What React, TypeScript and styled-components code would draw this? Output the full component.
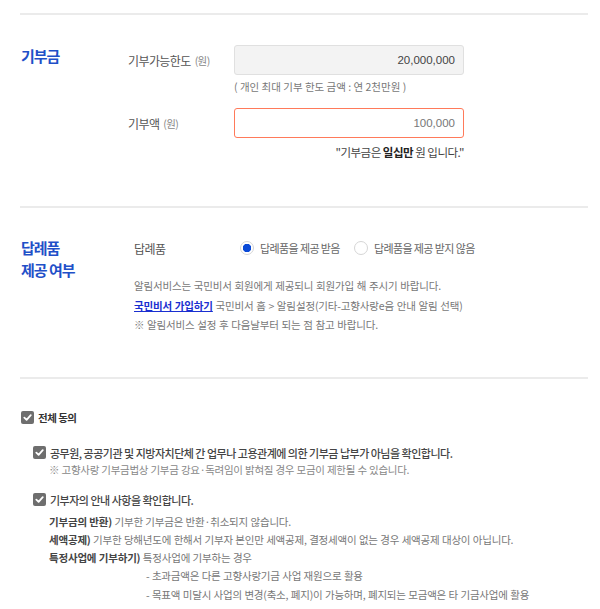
import React from 'react';
import styled, { createGlobalStyle } from 'styled-components';

const GlobalStyle = createGlobalStyle`
  body {
    margin: 0;
    background: #fff;
    font-family: "Noto Sans CJK KR", "Noto Sans", sans-serif;
    color: #444;
  }
`;

const CheckIcon = () => (
  <svg width="9" height="9" viewBox="0 0 10 10">
    <path d="M1.5 5.2 L4 7.6 L8.6 2.4" fill="none" stroke="#fff" strokeWidth="2" strokeLinecap="round" strokeLinejoin="round" />
  </svg>
);

const agreeNotes = [
  { title: '기부금의 반환)', text: '기부한 기부금은 반환·취소되지 않습니다.' },
  { title: '세액공제)', text: '기부한 당해년도에 한해서 기부자 본인만 세액공제, 결정세액이 없는 경우 세액공제 대상이 아닙니다.' },
  { title: '특정사업에 기부하기)', text: '특정사업에 기부하는 경우' },
];

const subNotes = [
  '- 초과금액은 다른 고향사랑기금 사업 재원으로 활용',
  '- 목표액 미달시 사업의 변경(축소, 폐지)이 가능하며, 폐지되는 모금액은 타 기금사업에 활용',
];

export default function App() {
  return (
    <Page>
      <GlobalStyle />
      <Section $pad="30px 0 46px">
        <Heading>기부금</Heading>
        <Fields>
          <FieldRow>
            <Label>기부가능한도 <Unit>(원)</Unit></Label>
            <InputCol>
              <Amount $readonly>20,000,000</Amount>
              <Hint>( 개인 최대 기부 한도 금액 : 연 2천만원 )</Hint>
            </InputCol>
          </FieldRow>
          <FieldRow>
            <Label>기부액 <Unit>(원)</Unit></Label>
            <InputCol>
              <Amount>100,000</Amount>
              <Spelled>"기부금은 <b>일십만</b> 원 입니다."</Spelled>
            </InputCol>
          </FieldRow>
        </Fields>
      </Section>

      <Section $pad="29px 0 42px">
        <Heading>답례품<br />제공 여부</Heading>
        <GiftBody>
          <GiftRow>
            <GiftLabel>답례품</GiftLabel>
            <RadioGroup>
              <RadioOption>
                <Radio $checked />
                답례품을 제공 받음
              </RadioOption>
              <RadioOption>
                <Radio />
                답례품을 제공 받지 않음
              </RadioOption>
            </RadioGroup>
          </GiftRow>
          <InfoList>
            <p>알림서비스는 국민비서 회원에게 제공되니 회원가입 해 주시기 바랍니다.</p>
            <p><JoinLink href="#">국민비서 가입하기</JoinLink> 국민비서 홈 &gt; 알림설정(기타-고향사랑e음 안내 알림 선택)</p>
            <p>※ 알림서비스 설정 후 다음날부터 되는 점 참고 바랍니다.</p>
          </InfoList>
        </GiftBody>
      </Section>

      <Agree>
        <CheckRow $strong>
          <Box><CheckIcon /></Box>
          전체 동의
        </CheckRow>
        <AgreeItem>
          <CheckRow>
            <Box><CheckIcon /></Box>
            공무원, 공공기관 및 지방자치단체 간 업무나 고용관계에 의한 기부금 납부가 아님을 확인합니다.
          </CheckRow>
          <Note>※ 고향사랑 기부금법상 기부금 강요·독려임이 밝혀질 경우 모금이 제한될 수 있습니다.</Note>
        </AgreeItem>
        <AgreeItem>
          <CheckRow>
            <Box><CheckIcon /></Box>
            기부자의 안내 사항을 확인합니다.
          </CheckRow>
          <Terms>
            {agreeNotes.map(n => (
              <p key={n.title}><strong>{n.title}</strong> {n.text}</p>
            ))}
            {subNotes.map(s => (
              <SubNote key={s}>{s}</SubNote>
            ))}
          </Terms>
        </AgreeItem>
      </Agree>
    </Page>
  );
}

const Page = styled.div`
  width: 568px;
  margin: 0 0 0 20px;
  padding-top: 13px;
`;

const Section = styled.section<{ $pad: string }>`
  display: flex;
  border-top: 2px solid #ebebeb;
  padding: ${p => p.$pad};
`;

const Heading = styled.h2`
  width: 107px;
  flex: none;
  margin: 0;
  padding: 0 0 0 1px;
  font-size: 15px;
  font-weight: 700;
  line-height: 22px;
  letter-spacing: -1px;
  color: #1f50c8;
`;

const Fields = styled.div`
  display: flex;
  flex-direction: column;
  gap: 14px;
`;

const FieldRow = styled.div`
  display: flex;
  align-items: flex-start;
`;

const Label = styled.div`
  width: 106px;
  height: 30px;
  display: flex;
  align-items: center;
  font-size: 12px;
  letter-spacing: -0.6px;
  color: #555;
`;

const Unit = styled.span`
  margin-left: 4px;
  font-size: 10.5px;
  color: #888;
`;

const InputCol = styled.div`
  width: 230px;
  display: flex;
  flex-direction: column;
`;

const Amount = styled.div<{ $readonly?: boolean }>`
  box-sizing: border-box;
  height: 30px;
  display: flex;
  align-items: center;
  justify-content: flex-end;
  padding: 0 8px;
  border-radius: 3px;
  border: 1px solid ${p => (p.$readonly ? '#e0e0e0' : '#ff7a5a')};
  background: ${p => (p.$readonly ? '#f3f3f3' : '#fff')};
  font-family: "Liberation Sans", Arial, sans-serif;
  font-size: 11.5px;
  color: ${p => (p.$readonly ? '#444' : '#777')};
`;

const Hint = styled.div`
  margin-top: 4px;
  font-size: 10.5px;
  letter-spacing: 0;
  color: #777;
`;

const Spelled = styled.div`
  margin-top: 6px;
  text-align: right;
  font-size: 11.5px;
  letter-spacing: -0.5px;
  color: #444;
  b {
    color: #222;
  }
`;

const GiftBody = styled.div`
  padding-left: 6px;
  display: flex;
  flex-direction: column;
`;

const GiftRow = styled.div`
  display: flex;
  align-items: center;
  height: 22px;
`;

const GiftLabel = styled.div`
  width: 106px;
  font-size: 12px;
  letter-spacing: -0.6px;
  color: #555;
`;

const RadioGroup = styled.div`
  display: flex;
  gap: 14px;
`;

const RadioOption = styled.label`
  display: flex;
  align-items: center;
  gap: 6px;
  font-size: 11px;
  letter-spacing: -0.6px;
  color: #666;
`;

const Radio = styled.span<{ $checked?: boolean }>`
  box-sizing: border-box;
  width: 14px;
  height: 14px;
  border-radius: 50%;
  border: 1px solid #d6d6d6;
  background: ${p => (p.$checked ? 'radial-gradient(circle, #0a49d6 0 4px, #fff 4.5px)' : '#fff')};
`;

const InfoList = styled.div`
  margin-top: 17px;
  font-size: 10.5px;
  letter-spacing: -0.15px;
  word-spacing: 0.5px;
  line-height: 19.5px;
  color: #777;
  p {
    margin: 0;
  }
`;

const JoinLink = styled.a`
  color: #1a2fd0;
  font-weight: 700;
  text-decoration: underline;
`;

const Agree = styled.section`
  border-top: 2px solid #ebebeb;
  padding: 30px 0 0 1px;
  display: flex;
  flex-direction: column;
  gap: 13px;
`;

const AgreeItem = styled.div`
  padding-left: 12px;
  display: flex;
  flex-direction: column;
`;

const CheckRow = styled.label<{ $strong?: boolean }>`
  display: flex;
  align-items: center;
  gap: 4px;
  height: 18px;
  margin-bottom: ${p => (p.$strong ? '4px' : '0')};
  font-size: ${p => (p.$strong ? '10.5px' : '11px')};
  font-weight: ${p => (p.$strong ? 700 : 500)};
  letter-spacing: -0.5px;
  color: ${p => (p.$strong ? '#333' : '#444')};
`;

const Box = styled.span`
  width: 13px;
  height: 13px;
  flex: none;
  border-radius: 2px;
  background: #6e6e6e;
  display: flex;
  align-items: center;
  justify-content: center;
`;

const Note = styled.div`
  padding-left: 16px;
  font-size: 10.5px;
  letter-spacing: -0.3px;
  word-spacing: 0.3px;
  line-height: 16px;
  color: #888;
`;

const Terms = styled.div`
  padding: 4px 0 0 16px;
  font-size: 10.5px;
  letter-spacing: -0.2px;
  word-spacing: 0.3px;
  line-height: 18.3px;
  color: #777;
  p {
    margin: 0;
  }
  strong {
    color: #444;
    font-weight: 700;
  }
`;

const SubNote = styled.p`
  padding-left: 97px;
`;
